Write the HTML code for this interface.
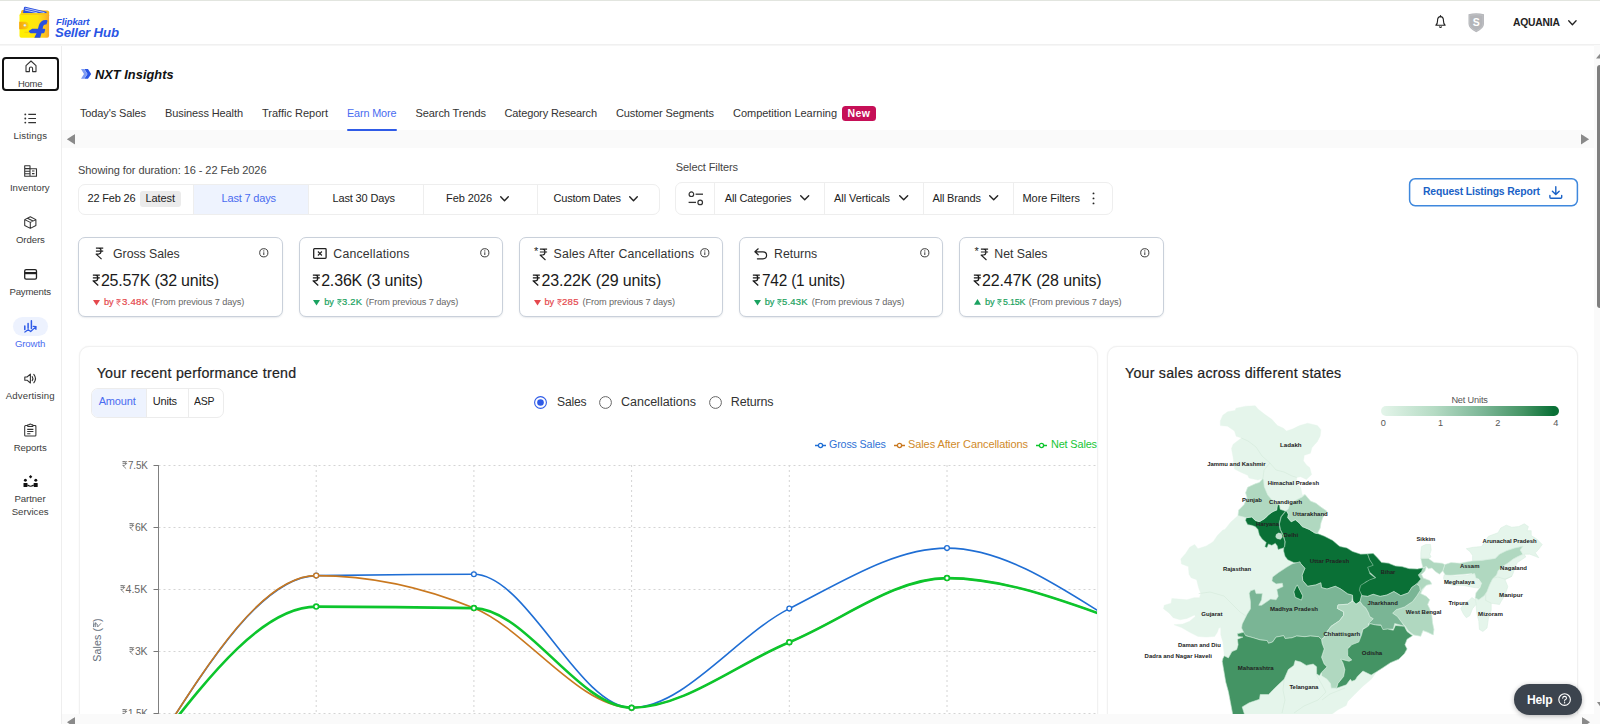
<!DOCTYPE html>
<html><head><meta charset="utf-8"><title>NXT Insights</title><style>
html,body{margin:0;padding:0;}
body{width:1600px;height:724px;overflow:hidden;background:#fff;position:relative;font-family:"Liberation Sans",sans-serif;}
.t{position:absolute;white-space:nowrap;}
.b{position:absolute;box-sizing:border-box;}
svg{overflow:visible;}
</style></head><body>
<div class="b" style="left:0.00px;top:0.00px;width:1600.00px;height:1.00px;background:#e2e5df;"></div>
<div class="b" style="left:0.00px;top:44.00px;width:1600.00px;height:1.00px;background:#f0f0f0;"></div>
<div class="b" style="left:0.00px;top:45.00px;width:1600.00px;height:1.00px;background:#f6f6f6;"></div>
<svg class="b" style="left:18.00px;top:6.00px;" width="33" height="34" viewBox="0 0 33 34">
<defs><linearGradient id="wg" x1="0" y1="0" x2="1" y2="0"><stop offset="0" stop-color="#fff000"/><stop offset="0.62" stop-color="#ffe410"/><stop offset="0.85" stop-color="#fdc41f"/><stop offset="1" stop-color="#f8a626"/></linearGradient>
<linearGradient id="cg" x1="0" y1="0" x2="1" y2="0"><stop offset="0" stop-color="#f6a30c"/><stop offset="1" stop-color="#ffd20a"/></linearGradient></defs>
<path d="M2.6 9 L3.2 5.4 Q3.5 4.1 4.8 4.1 L29.4 4.5 Q31.1 4.6 31.1 6.2 L31.1 10 Z" fill="#f6b416"/>
<path d="M5 7.2 L6 1.6 Q6.3 0.5 7.4 0.8 L28.4 5.7 L28.6 7.3 Z" fill="#2a4fe0"/>
<path d="M7.2 2.2 L26.5 6.6 M6.8 4 L19.5 6.9" stroke="#dfe7ff" stroke-width="0.8" fill="none"/>
<path d="M1.5 9.2 Q1.5 7.3 3.3 7.3 L29.2 7.3 Q31.1 7.3 31.1 9.2 L31.1 29.8 Q31.1 31.7 29.2 31.7 L3.4 31.7 Q1.5 31.7 1.5 29.8 Z" fill="url(#wg)"/>
<path d="M3 8.4 H29.6" stroke="#f6c21a" stroke-width="0.8"/>
<path d="M1.2 15.7 H7 Q10.6 15.7 10.6 19.5 Q10.6 23.3 7 23.3 H1.2 Z" fill="url(#cg)"/>
<circle cx="6.8" cy="19.3" r="1.35" fill="#eef1ff" stroke="#c9b24a" stroke-width="0.4"/>
<path d="M6.4 26.3 H13.5" stroke="#f2c800" stroke-width="0.7"/>
<path d="M16.3 31.7 L18.5 27.3 L12.6 27.3 Q11.2 26.6 10.6 25 L14.2 22.7 L20 22.7 L20.8 19.6 Q22.4 14 27.6 14 L28.6 14 Q29.9 14.2 29.4 15.6 L28.8 17.4 Q28.4 18.6 27.2 18.6 Q25.7 18.6 25.2 20.2 L24.6 22.7 L26.5 22.7 Q27.5 22.9 27.2 23.9 L26.5 26.3 Q26.2 27.3 25.2 27.3 L23.5 27.3 L22.2 31.7 Z" fill="#2a4fe0"/>
</svg>
<div class="t" style="left:56.30px;top:14.80px;font-size:9.8px;line-height:14px;color:#2a55e5;font-weight:bold;font-style:italic;letter-spacing:-0.126px;transform:scaleX(0.9707);transform-origin:0 50%;">Flipkart</div>
<div class="t" style="left:55.00px;top:24.10px;font-size:13.2px;line-height:18px;color:#2a55e5;font-weight:bold;font-style:italic;letter-spacing:-0.143px;">Seller Hub</div>
<svg class="b" style="left:1435.30px;top:15.20px;" width="11" height="13.8" viewBox="0 0 11 13.8"><path d="M5.5 1.7 C3 1.7 2.5 3.9 2.5 5.9 C2.5 8 2 9.3 0.9 10.3 H10.1 C9 9.3 8.5 8 8.5 5.9 C8.5 3.9 8 1.7 5.5 1.7 Z" fill="none" stroke="#222" stroke-width="1.15" stroke-linejoin="round"/><path d="M5.5 0.6 V1.7 M4.5 11.9 Q5.5 13 6.5 11.9" fill="none" stroke="#222" stroke-width="1.15" stroke-linecap="round"/></svg>
<svg class="b" style="left:1467.50px;top:12.70px;" width="16.5" height="19.5" viewBox="0 0 16.5 19.5"><path d="M0.5 1.2 Q8.25 -0.6 16 1.2 V11 Q16 15.5 8.25 19.2 Q0.5 15.5 0.5 11 Z" fill="#b4b5b9"/><path d="M1.6 2.3 Q8.25 0.8 14.9 2.3 V11 Q14.9 14.6 8.25 17.9 Q1.6 14.6 1.6 11 Z" fill="none" stroke="#c6c7ca" stroke-width="0.6"/><text x="8.25" y="13" font-family="Liberation Sans" font-weight="bold" font-size="10.5" fill="#fff" text-anchor="middle">S</text></svg>
<div class="t" style="left:1512.50px;top:14.70px;font-size:10.6px;line-height:15px;color:#222;font-weight:bold;letter-spacing:-0.206px;transform:scaleX(0.9745);transform-origin:0 50%;">AQUANIA</div>
<svg class="b" style="left:1568.30px;top:19.80px;" width="8.8" height="5.4" viewBox="0 0 8.8 5.4"><path d="M0.7 0.7 L4.4 4.7 L8.1 0.7" fill="none" stroke="#222" stroke-width="1.3" stroke-linecap="round" stroke-linejoin="round"/></svg>
<div class="b" style="left:61.00px;top:46.00px;width:1.00px;height:678.00px;background:#eeeeee;"></div>
<div class="b" style="left:2.00px;top:57.00px;width:57.00px;height:34.00px;border:2px solid #111;border-radius:4px;"></div>
<div class="t" style="left:18.00px;top:77.30px;font-size:9.6px;line-height:13px;color:#3c3c3c;font-weight:normal;letter-spacing:-0.213px;transform:scaleX(0.9813);transform-origin:0 50%;">Home</div>
<div class="t" style="left:13.50px;top:129.30px;font-size:9.6px;line-height:13px;color:#3c3c3c;font-weight:normal;letter-spacing:0.136px;">Listings</div>
<div class="t" style="left:9.90px;top:181.40px;font-size:9.6px;line-height:13px;color:#3c3c3c;font-weight:normal;letter-spacing:0.039px;">Inventory</div>
<div class="t" style="left:15.90px;top:233.00px;font-size:9.6px;line-height:13px;color:#3c3c3c;font-weight:normal;letter-spacing:-0.068px;">Orders</div>
<div class="t" style="left:9.40px;top:284.60px;font-size:9.6px;line-height:13px;color:#3c3c3c;font-weight:normal;letter-spacing:-0.155px;">Payments</div>
<div class="b" style="left:12.70px;top:317.00px;width:35.30px;height:18.80px;background:#edf2fe;border-radius:9.4px;"></div>
<div class="t" style="left:14.90px;top:336.90px;font-size:9.6px;line-height:13px;color:#4a6cf0;font-weight:normal;letter-spacing:-0.108px;">Growth</div>
<div class="t" style="left:5.80px;top:388.60px;font-size:9.6px;line-height:13px;color:#3c3c3c;font-weight:normal;letter-spacing:0.131px;">Advertising</div>
<div class="t" style="left:13.80px;top:440.70px;font-size:9.6px;line-height:13px;color:#3c3c3c;font-weight:normal;letter-spacing:-0.119px;">Reports</div>
<div class="t" style="left:14.50px;top:492.40px;font-size:9.6px;line-height:13px;color:#3c3c3c;font-weight:normal;letter-spacing:-0.064px;">Partner</div>
<div class="t" style="left:11.70px;top:505.20px;font-size:9.6px;line-height:13px;color:#3c3c3c;font-weight:normal;letter-spacing:0.013px;">Services</div>
<svg class="b" style="left:24.50px;top:60.30px;" width="12" height="12.5" viewBox="0 0 12 12.5"><path d="M1 5.6 L6 1 L11 5.6 V11.6 H7.6 V8.6 Q7.6 7 6 7 Q4.4 7 4.4 8.6 V11.6 H1 Z" fill="none" stroke="#333" stroke-width="1.1" stroke-linejoin="round"/></svg>
<svg class="b" style="left:24.40px;top:113.20px;" width="12.4" height="11" viewBox="0 0 12.4 11"><g fill="#333"><circle cx="1.3" cy="1.4" r="0.95"/><circle cx="1.3" cy="5.5" r="0.95"/><circle cx="1.3" cy="9.6" r="0.95"/></g><path d="M4.3 1.4 H12 M4.3 5.5 H12 M4.3 9.6 H12" stroke="#333" stroke-width="1.15"/></svg>
<svg class="b" style="left:24.00px;top:164.60px;" width="13.2" height="12" viewBox="0 0 13.2 12"><path d="M0.7 0.7 H6 V11.3 H0.7 Z M6 3.8 H12.5 V11.3 H6 M0.7 3.6 H6 M0.7 6.2 H6 M0.7 8.8 H6 M8 6 H10.5 M8 8.6 H10.5" fill="none" stroke="#333" stroke-width="1.1" stroke-linejoin="round"/></svg>
<svg class="b" style="left:24.30px;top:215.80px;" width="12.6" height="13.2" viewBox="0 0 12.6 13.2"><path d="M6.3 0.8 L11.9 3.6 V9.6 L6.3 12.4 L0.7 9.6 V3.6 Z M0.7 3.6 L6.3 6.4 L11.9 3.6 M6.3 6.4 V12.4 M3.4 2.2 L9.1 5" fill="none" stroke="#333" stroke-width="1.05" stroke-linejoin="round"/></svg>
<svg class="b" style="left:24.00px;top:269.30px;" width="13.2" height="10.8" viewBox="0 0 13.2 10.8"><rect x="0.7" y="0.7" width="11.8" height="9.4" rx="1.4" fill="none" stroke="#222" stroke-width="1.3"/><rect x="0.7" y="3" width="11.8" height="2.2" fill="#222"/></svg>
<svg class="b" style="left:24.40px;top:319.80px;" width="13.2" height="12.8" viewBox="0 0 13.2 12.8"><path d="M0.8 6 V9.4 M4.1 3.4 V8.2 M7.4 0.7 V8.6" stroke="#2f5be7" stroke-width="1.5" stroke-linecap="round"/><path d="M0.9 12.1 L4.2 9.7 L6.7 11.5 L11.8 6.9 M9.2 6.3 L12.1 6.5 L11.9 9.4" fill="none" stroke="#2f5be7" stroke-width="1.25" stroke-linecap="round" stroke-linejoin="round"/></svg>
<svg class="b" style="left:24.40px;top:372.80px;" width="12.6" height="11.2" viewBox="0 0 12.6 11.2"><path d="M0.8 4 H3 L6.4 1.2 V10 L3 7.2 H0.8 Z" fill="none" stroke="#333" stroke-width="1.1" stroke-linejoin="round"/><path d="M8.2 3.6 Q9.6 5.6 8.2 7.6 M9.8 1.4 Q13.2 5.6 9.8 9.8" fill="none" stroke="#333" stroke-width="1.1" stroke-linecap="round"/></svg>
<svg class="b" style="left:24.40px;top:423.20px;" width="12.6" height="13.8" viewBox="0 0 12.6 13.8"><path d="M3.8 2.4 H1.6 Q0.7 2.4 0.7 3.4 V12.2 Q0.7 13.1 1.6 13.1 H11 Q11.9 13.1 11.9 12.2 V3.4 Q11.9 2.4 11 2.4 H8.8 M3.8 3.4 V1.8 H5.2 Q6.3 0 7.4 1.8 H8.8 V3.4 Z M3.2 6.4 H9.4 M3.2 8.6 H9.4 M3.2 10.8 H6.4" fill="none" stroke="#333" stroke-width="1.05" stroke-linejoin="round"/></svg>
<svg class="b" style="left:23.00px;top:475.20px;" width="15.2" height="12.4" viewBox="0 0 15.2 12.4"><g fill="#111"><path d="M7.6 0 L9.3 1.7 L7.6 3.4 L5.9 1.7 Z"/><circle cx="2.4" cy="5.2" r="1.5"/><circle cx="12.8" cy="5.2" r="1.5"/><rect x="0.5" y="8" width="4" height="4" rx="0.6"/><rect x="10.7" y="8" width="4" height="4" rx="0.6"/></g><path d="M4.5 10 Q7.6 12.4 10.7 10" fill="none" stroke="#111" stroke-width="1.1"/></svg>
<svg class="b" style="left:81.00px;top:69.20px;" width="10.4" height="9.8" viewBox="0 0 10.4 9.8"><path d="M0 0 H3.2 L6.2 4.9 L3.2 9.8 H0 L3 4.9 Z" fill="#7f9cf3"/><path d="M3.4 0 H7 L10.2 4.9 L7 9.8 H3.4 L6.5 4.9 Z" fill="#2a55e5"/></svg>
<div class="t" style="left:95.00px;top:65.50px;font-size:12.8px;line-height:18px;color:#111;font-weight:bold;font-style:italic;letter-spacing:0.034px;">NXT Insights</div>
<div class="t" style="left:80.00px;top:105.50px;font-size:11px;line-height:15px;color:#333;font-weight:normal;letter-spacing:-0.127px;">Today&#x27;s Sales</div>
<div class="t" style="left:165.00px;top:105.50px;font-size:11px;line-height:15px;color:#333;font-weight:normal;letter-spacing:-0.106px;">Business Health</div>
<div class="t" style="left:262.00px;top:105.50px;font-size:11px;line-height:15px;color:#333;font-weight:normal;letter-spacing:-0.002px;">Traffic Report</div>
<div class="t" style="left:347.00px;top:105.50px;font-size:11px;line-height:15px;color:#4a6cf0;font-weight:normal;letter-spacing:-0.160px;transform:scaleX(0.9886);transform-origin:0 50%;">Earn More</div>
<div class="t" style="left:415.50px;top:105.50px;font-size:11px;line-height:15px;color:#333;font-weight:normal;letter-spacing:-0.087px;">Search Trends</div>
<div class="t" style="left:504.50px;top:105.50px;font-size:11px;line-height:15px;color:#333;font-weight:normal;letter-spacing:-0.142px;">Category Research</div>
<div class="t" style="left:616.00px;top:105.50px;font-size:11px;line-height:15px;color:#333;font-weight:normal;letter-spacing:-0.141px;">Customer Segments</div>
<div class="t" style="left:733.00px;top:105.50px;font-size:11px;line-height:15px;color:#333;font-weight:normal;letter-spacing:-0.030px;">Competition Learning</div>
<div class="b" style="left:841.50px;top:105.50px;width:34.50px;height:15.00px;background:#c60f57;border-radius:3.5px;"></div>
<div class="t" style="left:847.50px;top:105.50px;font-size:10.5px;line-height:15px;color:#fff;font-weight:bold;letter-spacing:0.455px;">New</div>
<div class="b" style="left:62.00px;top:130.00px;width:1532.00px;height:17.50px;background:#fafafa;"></div>
<svg class="b" style="left:67.00px;top:134.20px;" width="8" height="10.4" viewBox="0 0 8 10.4"><path d="M8 0.3 Q8 0 7.6 0.2 L0.3 4.9 Q0 5.2 0.3 5.5 L7.6 10.2 Q8 10.4 8 10.1 Z" fill="#8a8a8a"/></svg>
<svg class="b" style="left:1581.00px;top:134.20px;" width="8" height="10.4" viewBox="0 0 8 10.4"><path d="M0 0.3 Q0 0 0.4 0.2 L7.7 4.9 Q8 5.2 7.7 5.5 L0.4 10.2 Q0 10.4 0 10.1 Z" fill="#8a8a8a"/></svg>
<div class="b" style="left:347.00px;top:128.70px;width:50.00px;height:2.30px;background:#2f5be7;border-radius:1px;"></div>
<div class="t" style="left:78.00px;top:162.50px;font-size:11px;line-height:15px;color:#444;font-weight:normal;letter-spacing:-0.062px;">Showing for duration: 16 - 22 Feb 2026</div>
<div class="b" style="left:78.00px;top:184.00px;width:582.00px;height:31.00px;border:1px solid #eeeeee;border-radius:7px;"></div>
<div class="b" style="left:193.00px;top:185.00px;width:114.50px;height:29.00px;background:#eef3fe;"></div>
<div class="b" style="left:193.00px;top:185.00px;width:1.00px;height:29.00px;background:#eeeeee;"></div>
<div class="b" style="left:307.50px;top:185.00px;width:1.00px;height:29.00px;background:#eeeeee;"></div>
<div class="b" style="left:422.50px;top:185.00px;width:1.00px;height:29.00px;background:#eeeeee;"></div>
<div class="b" style="left:537.00px;top:185.00px;width:1.00px;height:29.00px;background:#eeeeee;"></div>
<div class="t" style="left:87.50px;top:191.30px;font-size:11px;line-height:15px;color:#222;font-weight:normal;letter-spacing:-0.192px;">22 Feb 26</div>
<div class="b" style="left:139.50px;top:191.00px;width:41.50px;height:16.00px;background:#ebebeb;border-radius:3px;"></div>
<div class="t" style="left:145.50px;top:191.30px;font-size:11px;line-height:15px;color:#222;font-weight:normal;letter-spacing:-0.093px;">Latest</div>
<div class="t" style="left:221.50px;top:191.30px;font-size:11px;line-height:15px;color:#4a6cf0;font-weight:normal;letter-spacing:-0.176px;">Last 7 days</div>
<div class="t" style="left:332.50px;top:191.30px;font-size:11px;line-height:15px;color:#222;font-weight:normal;letter-spacing:-0.155px;">Last 30 Days</div>
<div class="t" style="left:446.00px;top:191.30px;font-size:11px;line-height:15px;color:#222;font-weight:normal;letter-spacing:-0.069px;">Feb 2026</div>
<svg class="b" style="left:500.00px;top:196.20px;" width="9" height="5.4" viewBox="0 0 9 5.4"><path d="M0.7 0.7 L4.5 4.7 L8.3 0.7" fill="none" stroke="#222" stroke-width="1.4" stroke-linecap="round" stroke-linejoin="round"/></svg>
<div class="t" style="left:553.50px;top:191.30px;font-size:11px;line-height:15px;color:#222;font-weight:normal;letter-spacing:-0.199px;">Custom Dates</div>
<svg class="b" style="left:629.00px;top:196.20px;" width="9" height="5.4" viewBox="0 0 9 5.4"><path d="M0.7 0.7 L4.5 4.7 L8.3 0.7" fill="none" stroke="#222" stroke-width="1.4" stroke-linecap="round" stroke-linejoin="round"/></svg>
<div class="t" style="left:675.80px;top:160.00px;font-size:11px;line-height:15px;color:#444;font-weight:normal;letter-spacing:-0.106px;">Select Filters</div>
<div class="b" style="left:675.40px;top:182.00px;width:437.40px;height:33.00px;border:1px solid #eeeeee;border-radius:7px;"></div>
<div class="b" style="left:714.00px;top:183.00px;width:1.00px;height:31.00px;background:#eeeeee;"></div>
<div class="b" style="left:823.50px;top:183.00px;width:1.00px;height:31.00px;background:#eeeeee;"></div>
<div class="b" style="left:922.50px;top:183.00px;width:1.00px;height:31.00px;background:#eeeeee;"></div>
<div class="b" style="left:1013.00px;top:183.00px;width:1.00px;height:31.00px;background:#eeeeee;"></div>
<svg class="b" style="left:688.00px;top:190.60px;" width="15.6" height="14.8" viewBox="0 0 15.6 14.8"><circle cx="3.4" cy="3.2" r="2.3" fill="none" stroke="#333" stroke-width="1.2"/><path d="M7.6 3.2 H15" stroke="#333" stroke-width="1.3"/><circle cx="12.2" cy="11.4" r="2.3" fill="none" stroke="#333" stroke-width="1.2"/><path d="M0.6 11.4 H8" stroke="#333" stroke-width="1.3"/></svg>
<div class="t" style="left:724.80px;top:190.50px;font-size:11px;line-height:15px;color:#222;font-weight:normal;letter-spacing:-0.137px;">All Categories</div>
<svg class="b" style="left:800.00px;top:195.40px;" width="9.4" height="5.4" viewBox="0 0 9.4 5.4"><path d="M0.7 0.7 L4.7 4.7 L8.7 0.7" fill="none" stroke="#222" stroke-width="1.4" stroke-linecap="round" stroke-linejoin="round"/></svg>
<div class="t" style="left:834.00px;top:190.50px;font-size:11px;line-height:15px;color:#222;font-weight:normal;letter-spacing:-0.071px;">All Verticals</div>
<svg class="b" style="left:898.50px;top:195.40px;" width="9.4" height="5.4" viewBox="0 0 9.4 5.4"><path d="M0.7 0.7 L4.7 4.7 L8.7 0.7" fill="none" stroke="#222" stroke-width="1.4" stroke-linecap="round" stroke-linejoin="round"/></svg>
<div class="t" style="left:932.50px;top:190.50px;font-size:11px;line-height:15px;color:#222;font-weight:normal;letter-spacing:-0.182px;">All Brands</div>
<svg class="b" style="left:989.00px;top:195.40px;" width="9.4" height="5.4" viewBox="0 0 9.4 5.4"><path d="M0.7 0.7 L4.7 4.7 L8.7 0.7" fill="none" stroke="#222" stroke-width="1.4" stroke-linecap="round" stroke-linejoin="round"/></svg>
<div class="t" style="left:1022.50px;top:190.50px;font-size:11px;line-height:15px;color:#222;font-weight:normal;letter-spacing:-0.051px;">More Filters</div>
<svg class="b" style="left:1091.50px;top:192.00px;" width="3" height="13" viewBox="0 0 3 13"><circle cx="1.5" cy="1.4" r="0.95" fill="#222"/><circle cx="1.5" cy="6.4" r="0.95" fill="#222"/><circle cx="1.5" cy="11.4" r="0.95" fill="#222"/></svg>
<svg class="b" style="left:1408.00px;top:177.00px;" width="172" height="31" viewBox="0 0 172 31"><rect x="1.6" y="1.75" width="167.8" height="26.9" rx="5.6" fill="#fff" stroke="#3f88dd" stroke-width="1.5"/></svg>
<div class="t" style="left:1423.00px;top:184.30px;font-size:11px;line-height:15px;color:#1a62c6;font-weight:bold;letter-spacing:-0.144px;transform:scaleX(0.9440);transform-origin:0 50%;">Request Listings Report</div>
<svg class="b" style="left:1548.60px;top:186.00px;" width="13.6" height="13" viewBox="0 0 13.6 13"><path d="M6.8 0.8 V8.4 M3.4 5.2 L6.8 8.6 L10.2 5.2 M0.9 9.4 V11.2 Q0.9 12.2 1.9 12.2 H11.7 Q12.7 12.2 12.7 11.2 V9.4" fill="none" stroke="#1a62c6" stroke-width="1.4" stroke-linecap="round" stroke-linejoin="round"/></svg>
<div class="b" style="left:78.30px;top:237.20px;width:204.40px;height:79.50px;border:1px solid #c9d0da;border-radius:7px;box-shadow:0 1px 1.5px rgba(120,130,150,0.16);background:#fff;"></div>
<svg class="b" style="left:94.90px;top:247.30px;" width="9.14286" height="12.8" viewBox="0 0 10 14"><path d="M1 1.2H9M1 4.5H9M1 1.2H3.8C7.6 1.2 7.6 7.8 3.8 7.8H1.2L7.2 13.3" fill="none" stroke="#222" stroke-width="1.25" stroke-linejoin="round"/></svg>
<div class="t" style="left:113.10px;top:246.00px;font-size:12.3px;line-height:17px;color:#333;font-weight:normal;letter-spacing:-0.049px;">Gross Sales</div>
<svg class="b" style="left:259.30px;top:247.60px;" width="9.6" height="9.6" viewBox="0 0 9.6 9.6"><circle cx="4.8" cy="4.8" r="4.1" fill="none" stroke="#333" stroke-width="0.95"/><path d="M4.8 4.3 V7" stroke="#333" stroke-width="1"/><circle cx="4.8" cy="2.9" r="0.6" fill="#333"/></svg>
<svg class="b" style="left:91.60px;top:274.40px;" width="8.71429" height="12.2" viewBox="0 0 10 14"><path d="M1 1.2H9M1 4.5H9M1 1.2H3.8C7.6 1.2 7.6 7.8 3.8 7.8H1.2L7.2 13.3" fill="none" stroke="#1a1a1a" stroke-width="1.45" stroke-linejoin="round"/></svg>
<div class="t" style="left:100.90px;top:269.50px;font-size:16px;line-height:22px;color:#1a1a1a;font-weight:normal;letter-spacing:-0.228px;">25.57K (32 units)</div>
<svg class="b" style="left:93.10px;top:299.90px;" width="7" height="5.6" viewBox="0 0 7 5.6"><path d="M0 0 H7 L3.5 5.6 Z" fill="#e5484d"/></svg>
<div class="t" style="left:104.00px;top:296.20px;font-size:9.2px;line-height:13px;color:#e5484d;font-weight:normal;letter-spacing:-0.117px;-webkit-text-stroke:0.2px #e5484d;">by</div>
<svg class="b" style="left:116.40px;top:299.00px;" width="5.14286" height="7.2" viewBox="0 0 10 14"><path d="M1 1.2H9M1 4.5H9M1 1.2H3.8C7.6 1.2 7.6 7.8 3.8 7.8H1.2L7.2 13.3" fill="none" stroke="#e5484d" stroke-width="1.5" stroke-linejoin="round"/></svg>
<div class="t" style="left:121.60px;top:296.20px;font-size:9.2px;line-height:13px;color:#e5484d;font-weight:normal;letter-spacing:0.210px;transform:scaleX(1.0529);transform-origin:0 50%;-webkit-text-stroke:0.2px #e5484d;">3.48K</div>
<div class="t" style="left:151.60px;top:296.20px;font-size:9.2px;line-height:13px;color:#666;font-weight:normal;letter-spacing:-0.085px;">(From previous 7 days)</div>
<div class="b" style="left:298.55px;top:237.20px;width:204.40px;height:79.50px;border:1px solid #c9d0da;border-radius:7px;box-shadow:0 1px 1.5px rgba(120,130,150,0.16);background:#fff;"></div>
<svg class="b" style="left:312.55px;top:248.00px;" width="13.8" height="11" viewBox="0 0 13.8 11"><rect x="0.7" y="0.7" width="12.4" height="9.6" rx="0.8" fill="none" stroke="#222" stroke-width="1.3"/><path d="M4.9 3.5 L8.9 7.5 M8.9 3.5 L4.9 7.5" stroke="#222" stroke-width="1.1"/></svg>
<div class="t" style="left:333.35px;top:246.00px;font-size:12.3px;line-height:17px;color:#333;font-weight:normal;letter-spacing:0.188px;">Cancellations</div>
<svg class="b" style="left:479.55px;top:247.60px;" width="9.6" height="9.6" viewBox="0 0 9.6 9.6"><circle cx="4.8" cy="4.8" r="4.1" fill="none" stroke="#333" stroke-width="0.95"/><path d="M4.8 4.3 V7" stroke="#333" stroke-width="1"/><circle cx="4.8" cy="2.9" r="0.6" fill="#333"/></svg>
<svg class="b" style="left:311.85px;top:274.40px;" width="8.71429" height="12.2" viewBox="0 0 10 14"><path d="M1 1.2H9M1 4.5H9M1 1.2H3.8C7.6 1.2 7.6 7.8 3.8 7.8H1.2L7.2 13.3" fill="none" stroke="#1a1a1a" stroke-width="1.45" stroke-linejoin="round"/></svg>
<div class="t" style="left:321.15px;top:269.50px;font-size:16px;line-height:22px;color:#1a1a1a;font-weight:normal;letter-spacing:-0.168px;">2.36K (3 units)</div>
<svg class="b" style="left:313.35px;top:299.90px;" width="7" height="5.6" viewBox="0 0 7 5.6"><path d="M0 0 H7 L3.5 5.6 Z" fill="#1aa260"/></svg>
<div class="t" style="left:324.25px;top:296.20px;font-size:9.2px;line-height:13px;color:#1aa260;font-weight:normal;letter-spacing:-0.117px;-webkit-text-stroke:0.2px #1aa260;">by</div>
<svg class="b" style="left:336.65px;top:299.00px;" width="5.14286" height="7.2" viewBox="0 0 10 14"><path d="M1 1.2H9M1 4.5H9M1 1.2H3.8C7.6 1.2 7.6 7.8 3.8 7.8H1.2L7.2 13.3" fill="none" stroke="#1aa260" stroke-width="1.5" stroke-linejoin="round"/></svg>
<div class="t" style="left:341.85px;top:296.20px;font-size:9.2px;line-height:13px;color:#1aa260;font-weight:normal;letter-spacing:0.221px;transform:scaleX(1.0261);transform-origin:0 50%;-webkit-text-stroke:0.2px #1aa260;">3.2K</div>
<div class="t" style="left:365.75px;top:296.20px;font-size:9.2px;line-height:13px;color:#666;font-weight:normal;letter-spacing:-0.085px;">(From previous 7 days)</div>
<div class="b" style="left:518.80px;top:237.20px;width:204.40px;height:79.50px;border:1px solid #c9d0da;border-radius:7px;box-shadow:0 1px 1.5px rgba(120,130,150,0.16);background:#fff;"></div>
<div class="t" style="left:534.00px;top:244.00px;font-size:11px;line-height:15px;color:#222;font-weight:normal;">*</div>
<svg class="b" style="left:539.40px;top:247.80px;" width="9" height="12.6" viewBox="0 0 10 14"><path d="M1 1.2H9M1 4.5H9M1 1.2H3.8C7.6 1.2 7.6 7.8 3.8 7.8H1.2L7.2 13.3" fill="none" stroke="#222" stroke-width="1.25" stroke-linejoin="round"/></svg>
<div class="t" style="left:553.60px;top:246.00px;font-size:12.3px;line-height:17px;color:#333;font-weight:normal;letter-spacing:0.161px;">Sales After Cancellations</div>
<svg class="b" style="left:700.20px;top:247.60px;" width="9.6" height="9.6" viewBox="0 0 9.6 9.6"><circle cx="4.8" cy="4.8" r="4.1" fill="none" stroke="#333" stroke-width="0.95"/><path d="M4.8 4.3 V7" stroke="#333" stroke-width="1"/><circle cx="4.8" cy="2.9" r="0.6" fill="#333"/></svg>
<svg class="b" style="left:532.10px;top:274.40px;" width="8.71429" height="12.2" viewBox="0 0 10 14"><path d="M1 1.2H9M1 4.5H9M1 1.2H3.8C7.6 1.2 7.6 7.8 3.8 7.8H1.2L7.2 13.3" fill="none" stroke="#1a1a1a" stroke-width="1.45" stroke-linejoin="round"/></svg>
<div class="t" style="left:541.40px;top:269.50px;font-size:16px;line-height:22px;color:#1a1a1a;font-weight:normal;letter-spacing:-0.122px;">23.22K (29 units)</div>
<svg class="b" style="left:533.60px;top:299.90px;" width="7" height="5.6" viewBox="0 0 7 5.6"><path d="M0 0 H7 L3.5 5.6 Z" fill="#e5484d"/></svg>
<div class="t" style="left:544.50px;top:296.20px;font-size:9.2px;line-height:13px;color:#e5484d;font-weight:normal;letter-spacing:-0.117px;-webkit-text-stroke:0.2px #e5484d;">by</div>
<svg class="b" style="left:556.90px;top:299.00px;" width="5.14286" height="7.2" viewBox="0 0 10 14"><path d="M1 1.2H9M1 4.5H9M1 1.2H3.8C7.6 1.2 7.6 7.8 3.8 7.8H1.2L7.2 13.3" fill="none" stroke="#e5484d" stroke-width="1.5" stroke-linejoin="round"/></svg>
<div class="t" style="left:562.10px;top:296.20px;font-size:9.2px;line-height:13px;color:#e5484d;font-weight:normal;letter-spacing:0.269px;transform:scaleX(1.0449);transform-origin:0 50%;-webkit-text-stroke:0.2px #e5484d;">285</div>
<div class="t" style="left:582.50px;top:296.20px;font-size:9.2px;line-height:13px;color:#666;font-weight:normal;letter-spacing:-0.085px;">(From previous 7 days)</div>
<div class="b" style="left:739.05px;top:237.20px;width:204.40px;height:79.50px;border:1px solid #c9d0da;border-radius:7px;box-shadow:0 1px 1.5px rgba(120,130,150,0.16);background:#fff;"></div>
<svg class="b" style="left:753.85px;top:247.60px;" width="13.4" height="11.6" viewBox="0 0 13.4 11.6"><path d="M4.2 0.8 L0.9 3.8 L4.2 6.8 M0.9 3.8 H9 Q12.6 3.8 12.6 7.3 Q12.6 10.8 9 10.8 H3.4" fill="none" stroke="#222" stroke-width="1.2" stroke-linecap="round" stroke-linejoin="round"/></svg>
<div class="t" style="left:774.05px;top:246.00px;font-size:12.3px;line-height:17px;color:#333;font-weight:normal;letter-spacing:0.005px;">Returns</div>
<svg class="b" style="left:920.05px;top:247.60px;" width="9.6" height="9.6" viewBox="0 0 9.6 9.6"><circle cx="4.8" cy="4.8" r="4.1" fill="none" stroke="#333" stroke-width="0.95"/><path d="M4.8 4.3 V7" stroke="#333" stroke-width="1"/><circle cx="4.8" cy="2.9" r="0.6" fill="#333"/></svg>
<svg class="b" style="left:752.35px;top:274.40px;" width="8.71429" height="12.2" viewBox="0 0 10 14"><path d="M1 1.2H9M1 4.5H9M1 1.2H3.8C7.6 1.2 7.6 7.8 3.8 7.8H1.2L7.2 13.3" fill="none" stroke="#1a1a1a" stroke-width="1.45" stroke-linejoin="round"/></svg>
<div class="t" style="left:761.65px;top:269.50px;font-size:16px;line-height:22px;color:#1a1a1a;font-weight:normal;letter-spacing:-0.185px;transform:scaleX(0.9595);transform-origin:0 50%;">742 (1 units)</div>
<svg class="b" style="left:753.85px;top:299.90px;" width="7" height="5.6" viewBox="0 0 7 5.6"><path d="M0 0 H7 L3.5 5.6 Z" fill="#1aa260"/></svg>
<div class="t" style="left:764.75px;top:296.20px;font-size:9.2px;line-height:13px;color:#1aa260;font-weight:normal;letter-spacing:-0.117px;-webkit-text-stroke:0.2px #1aa260;">by</div>
<svg class="b" style="left:777.15px;top:299.00px;" width="5.14286" height="7.2" viewBox="0 0 10 14"><path d="M1 1.2H9M1 4.5H9M1 1.2H3.8C7.6 1.2 7.6 7.8 3.8 7.8H1.2L7.2 13.3" fill="none" stroke="#1aa260" stroke-width="1.5" stroke-linejoin="round"/></svg>
<div class="t" style="left:782.35px;top:296.20px;font-size:9.2px;line-height:13px;color:#1aa260;font-weight:normal;letter-spacing:0.210px;transform:scaleX(1.0288);transform-origin:0 50%;-webkit-text-stroke:0.2px #1aa260;">5.43K</div>
<div class="t" style="left:811.75px;top:296.20px;font-size:9.2px;line-height:13px;color:#666;font-weight:normal;letter-spacing:-0.085px;">(From previous 7 days)</div>
<div class="b" style="left:959.30px;top:237.20px;width:204.40px;height:79.50px;border:1px solid #c9d0da;border-radius:7px;box-shadow:0 1px 1.5px rgba(120,130,150,0.16);background:#fff;"></div>
<div class="t" style="left:974.50px;top:244.00px;font-size:11px;line-height:15px;color:#222;font-weight:normal;">*</div>
<svg class="b" style="left:979.90px;top:247.80px;" width="9" height="12.6" viewBox="0 0 10 14"><path d="M1 1.2H9M1 4.5H9M1 1.2H3.8C7.6 1.2 7.6 7.8 3.8 7.8H1.2L7.2 13.3" fill="none" stroke="#222" stroke-width="1.25" stroke-linejoin="round"/></svg>
<div class="t" style="left:994.30px;top:246.00px;font-size:12.3px;line-height:17px;color:#333;font-weight:normal;letter-spacing:-0.028px;">Net Sales</div>
<svg class="b" style="left:1140.30px;top:247.60px;" width="9.6" height="9.6" viewBox="0 0 9.6 9.6"><circle cx="4.8" cy="4.8" r="4.1" fill="none" stroke="#333" stroke-width="0.95"/><path d="M4.8 4.3 V7" stroke="#333" stroke-width="1"/><circle cx="4.8" cy="2.9" r="0.6" fill="#333"/></svg>
<svg class="b" style="left:972.60px;top:274.40px;" width="8.71429" height="12.2" viewBox="0 0 10 14"><path d="M1 1.2H9M1 4.5H9M1 1.2H3.8C7.6 1.2 7.6 7.8 3.8 7.8H1.2L7.2 13.3" fill="none" stroke="#1a1a1a" stroke-width="1.45" stroke-linejoin="round"/></svg>
<div class="t" style="left:981.90px;top:269.50px;font-size:16px;line-height:22px;color:#1a1a1a;font-weight:normal;letter-spacing:-0.128px;">22.47K (28 units)</div>
<svg class="b" style="left:974.10px;top:299.30px;" width="7" height="5.8" viewBox="0 0 7 5.8"><path d="M0 5.8 H7 L3.5 0 Z" fill="#1aa260"/></svg>
<div class="t" style="left:985.00px;top:296.20px;font-size:9.2px;line-height:13px;color:#1aa260;font-weight:normal;letter-spacing:-0.117px;-webkit-text-stroke:0.2px #1aa260;">by</div>
<svg class="b" style="left:997.40px;top:299.00px;" width="5.14286" height="7.2" viewBox="0 0 10 14"><path d="M1 1.2H9M1 4.5H9M1 1.2H3.8C7.6 1.2 7.6 7.8 3.8 7.8H1.2L7.2 13.3" fill="none" stroke="#1aa260" stroke-width="1.5" stroke-linejoin="round"/></svg>
<div class="t" style="left:1002.60px;top:296.20px;font-size:9.2px;line-height:13px;color:#1aa260;font-weight:normal;letter-spacing:-0.150px;transform:scaleX(0.9556);transform-origin:0 50%;-webkit-text-stroke:0.2px #1aa260;">5.15K</div>
<div class="t" style="left:1028.80px;top:296.20px;font-size:9.2px;line-height:13px;color:#666;font-weight:normal;letter-spacing:-0.085px;">(From previous 7 days)</div>
<div class="b" style="left:78.50px;top:345.80px;width:1019.00px;height:400.00px;border:1px solid #f1f1f1;border-radius:10px;background:#fff;box-shadow:0 0 1.5px rgba(0,0,0,0.07);"></div>
<div class="t" style="left:96.70px;top:362.70px;font-size:14.2px;line-height:20px;color:#222;font-weight:normal;letter-spacing:0.269px;-webkit-text-stroke:0.2px #222;">Your recent performance trend</div>
<div class="b" style="left:91.30px;top:387.60px;width:132.50px;height:30.20px;border:1px solid #ececec;border-radius:7px;overflow:hidden;"></div>
<div class="b" style="left:92.30px;top:388.60px;width:53.60px;height:28.20px;background:#eef3fe;border-radius:6px 0 0 6px;"></div>
<div class="b" style="left:145.90px;top:388.60px;width:1.00px;height:28.20px;background:#ececec;"></div>
<div class="b" style="left:187.50px;top:388.60px;width:1.00px;height:28.20px;background:#ececec;"></div>
<div class="t" style="left:98.70px;top:394.20px;font-size:11px;line-height:15px;color:#4a6cf0;font-weight:normal;letter-spacing:-0.162px;">Amount</div>
<div class="t" style="left:152.80px;top:394.20px;font-size:11px;line-height:15px;color:#222;font-weight:normal;letter-spacing:-0.215px;">Units</div>
<div class="t" style="left:193.80px;top:394.20px;font-size:11px;line-height:15px;color:#222;font-weight:normal;letter-spacing:-0.275px;transform:scaleX(0.9506);transform-origin:0 50%;">ASP</div>
<svg class="b" style="left:534.00px;top:395.50px;" width="13" height="13" viewBox="0 0 13 13"><circle cx="6.5" cy="6.5" r="5.9" fill="#fff" stroke="#2f5be7" stroke-width="1.1"/><circle cx="6.5" cy="6.5" r="3.3" fill="#2f5be7"/></svg>
<div class="t" style="left:556.50px;top:393.00px;font-size:12.5px;line-height:18px;color:#333;font-weight:normal;letter-spacing:-0.195px;transform:scaleX(0.9676);transform-origin:0 50%;">Sales</div>
<svg class="b" style="left:598.75px;top:395.50px;" width="13" height="13" viewBox="0 0 13 13"><circle cx="6.5" cy="6.5" r="5.9" fill="#fff" stroke="#666" stroke-width="1"/></svg>
<div class="t" style="left:621.00px;top:393.00px;font-size:12.5px;line-height:18px;color:#333;font-weight:normal;letter-spacing:-0.004px;">Cancellations</div>
<svg class="b" style="left:708.75px;top:395.50px;" width="13" height="13" viewBox="0 0 13 13"><circle cx="6.5" cy="6.5" r="5.9" fill="#fff" stroke="#666" stroke-width="1"/></svg>
<div class="t" style="left:730.80px;top:393.00px;font-size:12.5px;line-height:18px;color:#333;font-weight:normal;letter-spacing:-0.178px;">Returns</div>
<div class="b" style="left:79.5px;top:430px;width:1017px;height:294px;overflow:hidden;"><svg style="position:absolute;left:-79.5px;top:-430px;" width="1600" height="724" viewBox="0 0 1600 724"><path d="M158.5 465.5 H1097" stroke="#d4d4d4" stroke-width="1" stroke-dasharray="2 3" fill="none"/><path d="M153.5 465.5 H158.5" stroke="#777" stroke-width="1"/><path d="M158.5 527.5 H1097" stroke="#d4d4d4" stroke-width="1" stroke-dasharray="2 3" fill="none"/><path d="M153.5 527.5 H158.5" stroke="#777" stroke-width="1"/><path d="M158.5 589.5 H1097" stroke="#d4d4d4" stroke-width="1" stroke-dasharray="2 3" fill="none"/><path d="M153.5 589.5 H158.5" stroke="#777" stroke-width="1"/><path d="M158.5 651.5 H1097" stroke="#d4d4d4" stroke-width="1" stroke-dasharray="2 3" fill="none"/><path d="M153.5 651.5 H158.5" stroke="#777" stroke-width="1"/><path d="M158.5 713.5 H1097" stroke="#d4d4d4" stroke-width="1" stroke-dasharray="2 3" fill="none"/><path d="M153.5 713.5 H158.5" stroke="#777" stroke-width="1"/><path d="M316.2 465 V724" stroke="#d4d4d4" stroke-width="1" stroke-dasharray="2 3" fill="none"/><path d="M473.9 465 V724" stroke="#d4d4d4" stroke-width="1" stroke-dasharray="2 3" fill="none"/><path d="M631.6 465 V724" stroke="#d4d4d4" stroke-width="1" stroke-dasharray="2 3" fill="none"/><path d="M789.3 465 V724" stroke="#d4d4d4" stroke-width="1" stroke-dasharray="2 3" fill="none"/><path d="M947 465 V724" stroke="#d4d4d4" stroke-width="1" stroke-dasharray="2 3" fill="none"/><path d="M158.5 465 V724" stroke="#808080" stroke-width="1"/><path d="M158.50 741.00 C211.07 658.73 263.63 576.47 316.20 575.60 C368.77 574.73 421.33 574.30 473.90 574.30 C526.47 574.30 579.03 707.70 631.60 707.70 C684.17 707.70 736.73 635.20 789.30 608.60 C841.87 582.00 894.43 548.10 947.00 548.10 C999.57 548.10 1052.13 581.55 1104.70 615.00" fill="none" stroke="#1f6ed4" stroke-width="1.6" stroke-linejoin="round"/><circle cx="158.5" cy="741.0" r="2.4" fill="#fff" stroke="#1f6ed4" stroke-width="1.3"/><circle cx="316.2" cy="575.6" r="2.4" fill="#fff" stroke="#1f6ed4" stroke-width="1.3"/><circle cx="473.9" cy="574.3" r="2.4" fill="#fff" stroke="#1f6ed4" stroke-width="1.3"/><circle cx="631.6" cy="707.7" r="2.4" fill="#fff" stroke="#1f6ed4" stroke-width="1.3"/><circle cx="789.3" cy="608.6" r="2.4" fill="#fff" stroke="#1f6ed4" stroke-width="1.3"/><circle cx="947.0" cy="548.1" r="2.4" fill="#fff" stroke="#1f6ed4" stroke-width="1.3"/><circle cx="1104.7" cy="615.0" r="2.4" fill="#fff" stroke="#1f6ed4" stroke-width="1.3"/><path d="M158.50 741.00 C211.07 658.30 263.63 575.60 316.20 575.60 C368.77 575.60 421.33 586.43 473.90 608.10 C526.47 629.77 579.03 707.70 631.60 707.70 C684.17 707.70 736.73 663.80 789.30 642.20 C841.87 620.60 894.43 578.10 947.00 578.10 C999.57 578.10 1052.13 596.80 1104.70 615.50" fill="none" stroke="#c9781f" stroke-width="1.6" stroke-linejoin="round"/><circle cx="158.5" cy="741.0" r="2.4" fill="#fff" stroke="#c9781f" stroke-width="1.3"/><circle cx="316.2" cy="575.6" r="2.4" fill="#fff" stroke="#c9781f" stroke-width="1.3"/><circle cx="473.9" cy="608.1" r="2.4" fill="#fff" stroke="#c9781f" stroke-width="1.3"/><circle cx="631.6" cy="707.7" r="2.4" fill="#fff" stroke="#c9781f" stroke-width="1.3"/><circle cx="789.3" cy="642.2" r="2.4" fill="#fff" stroke="#c9781f" stroke-width="1.3"/><circle cx="947.0" cy="578.1" r="2.4" fill="#fff" stroke="#c9781f" stroke-width="1.3"/><circle cx="1104.7" cy="615.5" r="2.4" fill="#fff" stroke="#c9781f" stroke-width="1.3"/><path d="M158.50 741.00 C211.07 673.80 263.63 606.60 316.20 606.60 C368.77 606.60 421.33 607.10 473.90 608.10 C526.47 609.10 579.03 707.70 631.60 707.70 C684.17 707.70 736.73 663.80 789.30 642.20 C841.87 620.60 894.43 578.10 947.00 578.10 C999.57 578.10 1052.13 596.80 1104.70 615.50" fill="none" stroke="#0cc52c" stroke-width="2.6" stroke-linejoin="round"/><circle cx="158.5" cy="741.0" r="2.4" fill="#fff" stroke="#0cc52c" stroke-width="1.7"/><circle cx="316.2" cy="606.6" r="2.4" fill="#fff" stroke="#0cc52c" stroke-width="1.7"/><circle cx="473.9" cy="608.1" r="2.4" fill="#fff" stroke="#0cc52c" stroke-width="1.7"/><circle cx="631.6" cy="707.7" r="2.4" fill="#fff" stroke="#0cc52c" stroke-width="1.7"/><circle cx="789.3" cy="642.2" r="2.4" fill="#fff" stroke="#0cc52c" stroke-width="1.7"/><circle cx="947.0" cy="578.1" r="2.4" fill="#fff" stroke="#0cc52c" stroke-width="1.7"/><circle cx="1104.7" cy="615.5" r="2.4" fill="#fff" stroke="#0cc52c" stroke-width="1.7"/></svg></div>
<svg class="b" style="left:121.50px;top:461.30px;" width="5.71429" height="8" viewBox="0 0 10 14"><path d="M1 1.2H9M1 4.5H9M1 1.2H3.8C7.6 1.2 7.6 7.8 3.8 7.8H1.2L7.2 13.3" fill="none" stroke="#666" stroke-width="1.3" stroke-linejoin="round"/></svg>
<div class="t" style="left:127.50px;top:457.80px;font-size:10.6px;line-height:15px;color:#666;font-weight:normal;letter-spacing:-0.182px;transform:scaleX(0.9313);transform-origin:0 50%;">7.5K</div>
<svg class="b" style="left:128.80px;top:523.30px;" width="5.71429" height="8" viewBox="0 0 10 14"><path d="M1 1.2H9M1 4.5H9M1 1.2H3.8C7.6 1.2 7.6 7.8 3.8 7.8H1.2L7.2 13.3" fill="none" stroke="#666" stroke-width="1.3" stroke-linejoin="round"/></svg>
<div class="t" style="left:134.80px;top:519.80px;font-size:10.6px;line-height:15px;color:#666;font-weight:normal;letter-spacing:-0.324px;transform:scaleX(0.9888);transform-origin:0 50%;">6K</div>
<svg class="b" style="left:119.60px;top:585.30px;" width="5.71429" height="8" viewBox="0 0 10 14"><path d="M1 1.2H9M1 4.5H9M1 1.2H3.8C7.6 1.2 7.6 7.8 3.8 7.8H1.2L7.2 13.3" fill="none" stroke="#666" stroke-width="1.3" stroke-linejoin="round"/></svg>
<div class="t" style="left:125.60px;top:581.80px;font-size:10.6px;line-height:15px;color:#666;font-weight:normal;letter-spacing:-0.035px;">4.5K</div>
<svg class="b" style="left:128.80px;top:647.30px;" width="5.71429" height="8" viewBox="0 0 10 14"><path d="M1 1.2H9M1 4.5H9M1 1.2H3.8C7.6 1.2 7.6 7.8 3.8 7.8H1.2L7.2 13.3" fill="none" stroke="#666" stroke-width="1.3" stroke-linejoin="round"/></svg>
<div class="t" style="left:134.80px;top:643.80px;font-size:10.6px;line-height:15px;color:#666;font-weight:normal;letter-spacing:-0.324px;transform:scaleX(0.9888);transform-origin:0 50%;">3K</div>
<svg class="b" style="left:121.50px;top:709.30px;" width="5.71429" height="8" viewBox="0 0 10 14"><path d="M1 1.2H9M1 4.5H9M1 1.2H3.8C7.6 1.2 7.6 7.8 3.8 7.8H1.2L7.2 13.3" fill="none" stroke="#666" stroke-width="1.3" stroke-linejoin="round"/></svg>
<div class="t" style="left:127.50px;top:705.80px;font-size:10.6px;line-height:15px;color:#666;font-weight:normal;letter-spacing:-0.182px;transform:scaleX(0.9313);transform-origin:0 50%;">1.5K</div>
<div class="t" style="left:97.3px;top:639.7px;font-size:10.6px;line-height:14px;color:#66707c;transform:translate(-50%,-50%) rotate(-90deg);letter-spacing:0.1px;">Sales (<svg width="6" height="8.4" viewBox="0 0 10 14" style="vertical-align:-0.5px"><path d="M1 1.2H9M1 4.5H9M1 1.2H3.8C7.6 1.2 7.6 7.8 3.8 7.8H1.2L7.2 13.3" fill="none" stroke="#66707c" stroke-width="1.4"/></svg>)</div>
<svg class="b" style="left:814.50px;top:441.50px;" width="11" height="7" viewBox="0 0 11 7"><path d="M0 3.5 H11" stroke="#1f6ed4" stroke-width="1.5"/><circle cx="5.5" cy="3.5" r="2.1" fill="#fff" stroke="#1f6ed4" stroke-width="1.3"/></svg>
<div class="t" style="left:829.00px;top:437.10px;font-size:11px;line-height:15px;color:#2f72d6;font-weight:normal;letter-spacing:-0.150px;transform:scaleX(0.9724);transform-origin:0 50%;">Gross Sales</div>
<svg class="b" style="left:893.50px;top:441.50px;" width="11" height="7" viewBox="0 0 11 7"><path d="M0 3.5 H11" stroke="#c9781f" stroke-width="1.5"/><circle cx="5.5" cy="3.5" r="2.1" fill="#fff" stroke="#c9781f" stroke-width="1.3"/></svg>
<div class="t" style="left:908.00px;top:437.10px;font-size:11px;line-height:15px;color:#d08a2a;font-weight:normal;letter-spacing:-0.095px;">Sales After Cancellations</div>
<svg class="b" style="left:1036.00px;top:441.50px;" width="11" height="7" viewBox="0 0 11 7"><path d="M0 3.5 H11" stroke="#0cc52c" stroke-width="1.5"/><circle cx="5.5" cy="3.5" r="2.1" fill="#fff" stroke="#0cc52c" stroke-width="1.3"/></svg>
<div class="b" style="left:1050px;top:436px;width:46.5px;height:18px;overflow:hidden;">
<div class="t" style="left:0.80px;top:1.10px;font-size:11px;line-height:15px;color:#17c636;font-weight:normal;letter-spacing:-0.149px;transform:scaleX(0.9893);transform-origin:0 50%;">Net Sales</div>
</div>
<div class="b" style="left:1107.30px;top:345.80px;width:471.00px;height:400.00px;border:1px solid #f1f1f1;border-radius:10px;background:#fff;box-shadow:0 0 1.5px rgba(0,0,0,0.07);"></div>
<div class="t" style="left:1125.00px;top:362.70px;font-size:14.2px;line-height:20px;color:#222;font-weight:normal;letter-spacing:0.240px;-webkit-text-stroke:0.2px #222;">Your sales across different states</div>
<div class="t" style="left:1451.40px;top:394.20px;font-size:9.2px;line-height:13px;color:#555;font-weight:normal;letter-spacing:-0.154px;">Net Units</div>
<div class="b" style="left:1381.00px;top:406.00px;width:177.70px;height:10.00px;border-radius:5px;background:linear-gradient(90deg,#e4f5ea 0%,#b5dbc4 30%,#7ab595 58%,#449464 80%,#0a7036 97%);"></div>
<div class="t" style="left:1380.70px;top:416.70px;font-size:9.2px;line-height:13px;color:#555;font-weight:normal;">0</div>
<div class="t" style="left:1438.10px;top:416.70px;font-size:9.2px;line-height:13px;color:#555;font-weight:normal;">1</div>
<div class="t" style="left:1495.30px;top:416.70px;font-size:9.2px;line-height:13px;color:#555;font-weight:normal;">2</div>
<div class="t" style="left:1553.20px;top:416.70px;font-size:9.2px;line-height:13px;color:#555;font-weight:normal;">4</div>
<div class="b" style="left:1108.3px;top:380px;width:469px;height:344px;overflow:hidden;"><svg style="position:absolute;left:-1108.3px;top:-380px;font-family:'Liberation Sans',sans-serif;" width="1600" height="724" viewBox="0 0 1600 724"><polygon points="1220.4,420.7 1222.8,415.2 1227.6,411.7 1235.2,410.4 1235.9,408.3 1245.6,406.2 1255.3,405.8 1258.0,409.0 1264.9,414.5 1271.8,419.3 1277.4,425.6 1283.6,428.3 1286.4,431.1 1292.6,429.0 1299.5,425.6 1307.8,423.2 1317.4,425.6 1320.9,429.7 1320.2,435.9 1317.4,441.4 1311.9,447.7 1310.5,453.2 1304.3,455.3 1303.4,460.8 1306.4,464.9 1309.8,467.7 1311.6,474.6 1306.4,479.4 1300.6,476.7 1296.7,477.4 1296.7,482.4 1300.9,488.0 1302.2,494.9 1305.0,494.6 1307.1,497.0 1310.5,501.1 1316.0,503.2 1320.2,506.6 1326.4,510.8 1327.1,512.8 1323.0,517.0 1320.9,523.2 1320.2,528.0 1317.4,533.6 1324.4,536.3 1332.7,540.5 1338.2,545.3 1340.0,546.6 1346.9,548.0 1352.4,551.5 1360.7,554.2 1367.6,553.9 1373.2,553.5 1377.3,557.7 1381.5,562.5 1388.4,563.2 1395.3,566.0 1402.2,566.7 1409.1,568.7 1417.4,569.1 1422.9,568.0 1421.5,571.5 1418.1,574.9 1420.8,579.1 1425.7,578.4 1428.4,581.8 1431.9,584.6 1426.3,585.2 1420.7,593.5 1426.3,596.3 1429.7,599.7 1427.6,604.5 1429.7,608.7 1431.8,615.6 1432.5,622.5 1433.9,629.4 1433.2,634.9 1427.6,632.2 1423.0,631.0 1420.7,636.3 1413.8,634.9 1412.6,635.7 1407.1,639.2 1405.0,644.7 1407.1,648.9 1404.4,653.7 1398.8,659.2 1390.5,662.7 1382.2,668.2 1376.7,671.7 1371.2,679.3 1362.9,686.2 1354.6,694.5 1347.7,701.4 1346.3,705.5 1338.0,709.7 1332.5,713.8 1328.0,718.0 1234.0,718.0 1232.6,713.8 1230.5,702.8 1228.4,691.7 1225.7,682.0 1223.6,669.6 1222.2,661.3 1222.9,658.5 1224.3,655.8 1223.6,648.9 1222.9,642.0 1220.8,635.1 1220.8,627.5 1218.8,628.1 1217.4,632.3 1214.6,636.4 1206.3,637.1 1198.0,636.4 1189.7,632.3 1181.5,627.5 1173.9,624.7 1182.8,624.0 1189.7,621.2 1195.3,616.4 1194.6,615.0 1187.0,618.4 1180.1,619.8 1173.2,617.7 1169.0,612.9 1163.5,608.8 1164.2,605.3 1171.1,603.2 1171.8,598.4 1178.7,599.1 1187.0,599.8 1193.9,597.7 1199.4,597.7 1200.8,593.6 1198.7,588.0 1196.6,579.7 1191.1,577.7 1189.0,574.2 1188.4,566.6 1181.5,563.9 1180.8,559.0 1185.6,553.5 1189.7,547.3 1194.6,544.5 1198.0,548.7 1206.3,545.9 1213.2,541.7 1217.4,535.5 1222.9,530.0 1224.9,529.4 1230.4,522.5 1238.0,515.6 1238.7,510.1 1244.2,504.5 1247.0,497.6 1245.6,492.8 1247.7,487.3 1255.3,483.8 1259.4,482.4 1262.9,478.6 1258.0,480.1 1249.0,478.0 1247.7,475.3 1241.4,472.5 1234.5,469.1 1233.2,458.0 1231.5,448.4 1233.2,444.2 1241.4,438.0 1236.2,436.2 1234.5,431.1 1227.6,426.2 1220.4,425.6" fill="#e5f5eb" stroke="#e5f5eb" stroke-width="0.4" stroke-linejoin="round"/><path d="M1241.4 438 L1248 441 L1256 447 L1262 456 L1270 463 L1276 470 L1284 472 L1292 476 L1296.7 477.4 M1270 463 L1264 470 L1262.9 478.6 M1198.7 593.6 L1210 592 L1224 596 L1232 604 L1240 612 L1246 616 M1284.1 680 L1283 690 L1285 700 L1282 713 M1316 674 L1326 692 L1318 700 L1304 706 L1294 713 M1345 688 L1330 694 L1322 700" fill="none" stroke="#d3e9da" stroke-width="0.6"/><polygon points="1420.8,558.4 1420.8,552.8 1421.5,546.6 1425.7,544.5 1430.5,544.5 1431.2,550.0 1429.8,554.2 1431.0,557.0 1428.4,558.4" fill="#e5f5eb" stroke="#d9eee1" stroke-width="0.6" stroke-linejoin="round"/><polygon points="1466.3,548.7 1473.2,547.3 1481.5,546.6 1488.4,536.3 1498.0,532.8 1500.8,528.0 1506.3,525.2 1511.8,527.3 1518.8,526.6 1524.3,523.8 1528.4,526.6 1527.0,530.7 1531.2,530.7 1531.2,535.6 1536.7,539.0 1542.2,544.5 1538.1,550.1 1535.3,552.8 1538.8,557.7 1535.3,556.3 1529.8,554.2 1524.3,554.2 1520.1,550.0 1522.9,546.2 1514.6,548.0 1506.3,550.8 1499.4,554.2 1495.3,558.4 1481.5,560.4 1472.6,561.1 1472.6,555.6 1469.9,551.5" fill="#e5f5eb" stroke="#d9eee1" stroke-width="0.6" stroke-linejoin="round"/><polygon points="1524.3,554.2 1525.7,557.0 1517.4,562.5 1514.5,568.0 1513.3,572.8 1511.8,576.3 1505.0,579.7 1507.8,586.6 1505.0,594.9 1500.9,601.8 1499.5,604.5 1491.2,603.2 1491.2,610.1 1488.4,618.4 1487.0,628.0 1482.9,631.5 1479.4,629.4 1478.8,621.1 1476.7,612.8 1476.0,604.5 1475.3,597.6 1478.7,599.8 1484.2,595.7 1487.0,591.5 1489.7,584.6 1492.5,579.1 1496.6,574.9 1498.0,570.8 1502.2,566.6 1507.7,563.2 1513.2,559.0 1520.0,556.0" fill="#e5f5eb" stroke="#d9eee1" stroke-width="0.6" stroke-linejoin="round"/><path d="M1511.8 576.3 L1504.9 579.1 L1498 577 L1494 578 M1491.2 603.2 L1485.7 600.4 L1485.7 590.7 L1489.8 583.8" fill="none" stroke="#d3e9da" stroke-width="0.6"/><polygon points="1471.8,597.6 1475.3,599.7 1476.0,604.5 1472.5,608.7 1469.8,615.6 1466.3,617.7 1463.6,614.2 1460.8,608.7 1463.0,604.5 1469.1,600.4" fill="#e5f5eb" stroke="#d9eee1" stroke-width="0.6" stroke-linejoin="round"/><polygon points="1444.8,564.6 1451.0,562.5 1460.0,563.2 1471.8,561.1 1481.5,560.4 1495.3,558.4 1499.4,554.2 1506.3,550.8 1514.6,548.0 1522.9,546.2 1520.1,550.0 1522.9,554.2 1518.0,556.5 1513.2,559.0 1507.7,563.2 1502.2,566.6 1498.0,570.8 1496.6,574.9 1492.5,579.1 1489.7,584.6 1487.0,591.5 1484.2,595.7 1478.7,599.8 1475.2,597.7 1475.9,592.9 1480.1,587.4 1481.5,583.2 1478.7,579.1 1474.5,577.7 1471.8,573.6 1464.9,574.2 1455.0,575.0 1445.5,575.6 1442.8,570.8" fill="#b0d8c0" stroke="#d9eee1" stroke-width="0.6" stroke-linejoin="round"/><polygon points="1444.2,574.8 1455.0,576.0 1466.3,575.5 1474.6,573.5 1476.0,578.3 1481.5,583.1 1478.8,588.0 1474.0,587.5 1462.2,585.2 1452.5,585.2 1445.6,583.1 1443.5,578.3" fill="#e5f5eb" stroke="#d9eee1" stroke-width="0.6" stroke-linejoin="round"/><polygon points="1420.8,558.4 1428.4,558.4 1434.0,562.5 1442.2,563.2 1444.8,564.6 1442.8,570.8 1439.5,574.2 1435.3,571.5 1431.9,568.0 1428.5,568.8 1426.4,566.6 1422.9,568.0 1421.5,562.0" fill="#b0d8c0" stroke="#d9eee1" stroke-width="0.6" stroke-linejoin="round"/><polygon points="1422.9,568.0 1426.4,566.6 1425.0,571.0 1421.5,574.5 1421.4,574.1 1423.5,578.3 1429.7,580.4 1431.8,583.8 1426.3,585.2 1422.1,589.4 1420.7,593.5 1426.3,596.3 1429.7,599.7 1427.6,604.5 1429.7,608.7 1431.8,615.6 1432.5,622.5 1433.9,629.4 1433.2,634.9 1427.6,632.2 1423.0,630.5 1420.7,636.3 1413.8,634.9 1408.3,630.8 1405.5,626.6 1401.6,622.2 1397.4,616.6 1392.6,613.2 1396.1,609.7 1404.4,607.0 1412.6,601.5 1416.8,595.9 1420.2,590.4 1419.6,586.3 1416.7,583.9 1420.8,579.1 1418.1,574.9 1421.5,571.5" fill="#b0d8c0" stroke="#d9eee1" stroke-width="0.6" stroke-linejoin="round"/><polygon points="1286.4,510.8 1288.4,514.2 1287.7,517.7 1291.2,521.8 1295.3,519.7 1299.5,523.2 1302.2,526.6 1309.2,529.4 1314.7,532.9 1317.4,533.6 1324.4,536.3 1332.7,540.5 1338.2,545.3 1340.0,546.6 1346.9,548.0 1352.4,551.5 1360.7,554.2 1367.6,553.9 1369.8,560.0 1374.0,565.5 1368.4,568.3 1369.8,573.8 1375.3,578.0 1365.7,582.1 1360.1,587.6 1361.5,595.9 1360.1,601.5 1356.0,604.2 1353.2,601.5 1352.5,595.2 1347.7,593.9 1340.8,589.0 1335.3,586.3 1327.0,589.0 1321.5,587.6 1320.8,582.8 1315.9,584.9 1307.6,586.3 1302.8,580.7 1302.1,575.2 1304.9,568.3 1300.7,563.5 1293.8,562.5 1287.8,559.7 1285.1,556.3 1283.7,551.0 1284.0,545.0 1284.9,541.8 1282.9,534.9 1280.1,529.4 1279.0,523.9 1280.8,516.8 1285.0,511.5" fill="#0a7036" stroke="#8fc5a5" stroke-width="0.5" stroke-linejoin="round"/><polygon points="1367.6,553.9 1373.2,553.5 1377.3,557.7 1381.5,562.5 1388.4,563.2 1395.3,566.0 1402.2,566.7 1409.1,568.7 1417.4,569.1 1422.9,568.0 1421.5,571.5 1418.1,574.9 1420.8,579.1 1416.7,583.9 1411.8,587.4 1408.4,592.9 1400.8,595.7 1393.9,591.5 1387.0,595.0 1380.1,596.4 1373.2,594.3 1367.6,596.4 1362.1,595.7 1359.3,590.1 1360.7,585.3 1369.7,579.8 1375.9,577.7 1369.7,572.2 1367.6,567.3 1373.2,565.3 1369.7,559.7" fill="#0a7036" stroke="#8fc5a5" stroke-width="0.6" stroke-linejoin="round"/><polygon points="1277.4,504.5 1279.4,505.2 1280.1,509.4 1284.3,510.8 1285.0,511.5 1280.8,516.8 1279.0,523.9 1280.1,529.4 1282.9,534.9 1284.9,541.8 1284.3,547.3 1282.9,548.1 1278.1,549.4 1277.4,546.0 1275.3,543.2 1271.8,545.3 1268.4,543.9 1267.0,547.4 1264.9,546.7 1266.3,542.5 1262.2,539.1 1259.4,534.9 1258.0,529.4 1255.3,526.6 1251.8,525.3 1247.7,524.6 1245.6,520.4 1246.3,517.7 1251.8,517.0 1255.3,520.4 1259.4,521.8 1264.9,518.4 1269.1,514.2 1273.2,511.4 1276.7,510.1" fill="#0a7036" stroke="#8fc5a5" stroke-width="0.5" stroke-linejoin="round"/><path d="M1285.5 511.5 L1281.2 517 L1279.4 524 L1280.4 529.6 L1283.2 535 L1285.2 541.8 L1284.6 547" fill="none" stroke="#9fcdb1" stroke-width="0.7"/><polygon points="1276.0,534.5 1278.5,532.8 1281.5,533.5 1282.5,537.0 1280.5,539.4 1277.0,538.8 1275.6,537.0" fill="#bfe0cc" stroke="#bfe0cc" stroke-width="0.2" stroke-linejoin="round"/><polygon points="1262.9,478.6 1259.4,482.4 1255.3,483.8 1247.7,487.3 1245.6,492.8 1247.0,497.6 1244.2,504.5 1238.7,510.1 1238.0,515.6 1246.3,517.7 1251.8,517.0 1255.3,520.4 1259.4,521.8 1264.9,518.4 1269.1,514.2 1273.2,511.4 1276.7,510.1 1277.4,504.5 1275.3,502.5 1271.8,499.7 1267.7,494.9 1264.2,486.6 1263.6,480.0" fill="#b0d8c0" stroke="#d9eee1" stroke-width="0.6" stroke-linejoin="round"/><polygon points="1305.0,494.6 1307.1,497.0 1310.5,501.1 1316.0,503.2 1320.2,506.6 1326.4,510.8 1327.1,512.8 1323.0,517.0 1320.9,523.2 1320.2,528.0 1317.4,533.6 1314.7,532.9 1309.2,529.4 1302.2,526.6 1299.5,523.2 1295.3,519.7 1291.2,521.8 1287.7,517.7 1288.4,514.2 1286.4,510.8 1288.4,508.7 1289.8,503.9 1296.7,499.7 1302.2,497.0" fill="#b0d8c0" stroke="#d9eee1" stroke-width="0.6" stroke-linejoin="round"/><polygon points="1300.0,561.8 1292.0,563.9 1286.5,567.3 1278.2,572.8 1272.6,577.0 1271.9,581.1 1276.1,583.9 1282.3,583.2 1283.0,586.6 1276.8,589.4 1278.2,596.3 1276.1,599.8 1270.6,599.1 1261.6,605.3 1258.8,605.3 1261.6,599.8 1262.3,593.6 1256.1,593.6 1254.7,589.4 1250.5,590.8 1249.2,593.6 1250.5,601.8 1250.5,608.8 1247.1,614.3 1245.0,618.4 1242.2,624.0 1241.6,628.0 1243.6,632.3 1237.4,633.7 1238.1,636.4 1242.9,637.1 1245.7,635.7 1253.3,637.8 1260.2,639.9 1267.1,640.6 1268.5,643.3 1272.6,642.0 1276.1,637.1 1283.7,635.7 1285.1,638.5 1292.0,637.8 1296.6,636.0 1304.9,636.7 1310.4,636.0 1318.7,636.7 1321.5,639.4 1324.2,637.4 1327.0,631.8 1331.1,626.3 1339.4,620.8 1343.6,615.3 1343.6,611.8 1337.3,608.4 1338.0,604.9 1347.7,604.2 1351.8,601.5 1352.5,595.2 1347.7,593.9 1340.8,589.0 1335.3,586.3 1327.0,589.0 1321.5,587.6 1320.8,582.8 1315.9,584.9 1307.6,586.3 1302.8,580.7 1302.1,575.2 1304.9,568.3 1300.7,563.5" fill="#7ab595" stroke="#cfe9d9" stroke-width="0.6" stroke-linejoin="round"/><polygon points="1297.3,584.9 1300.0,590.4 1302.8,595.9 1301.4,600.1 1295.2,597.3 1293.8,591.8 1295.9,587.0" fill="#0a7036" stroke="#cfe9d9" stroke-width="0.7" stroke-linejoin="round"/><polygon points="1338.0,604.9 1347.7,604.2 1351.8,601.5 1353.2,601.5 1356.0,604.2 1360.1,601.5 1362.9,605.6 1365.7,607.7 1368.4,612.5 1369.8,616.6 1373.3,618.7 1368.4,623.6 1368.4,626.3 1362.9,629.1 1361.5,634.6 1360.1,641.5 1354.6,644.3 1349.1,647.0 1347.7,654.0 1347.7,655.8 1351.8,659.9 1349.1,661.3 1340.8,659.2 1342.9,662.7 1344.9,669.6 1343.6,676.5 1338.0,683.4 1336.6,688.2 1331.1,688.2 1330.4,683.4 1327.0,679.3 1321.5,675.8 1321.5,672.4 1327.0,666.8 1324.2,664.1 1321.5,657.2 1324.2,648.9 1322.1,643.3 1321.5,639.4 1324.2,637.4 1327.0,631.8 1331.1,626.3 1339.4,620.8 1343.6,615.3 1343.6,611.8 1337.3,608.4" fill="#b0d8c0" stroke="#e3f3e9" stroke-width="0.6" stroke-linejoin="round"/><polygon points="1361.5,595.9 1362.1,595.7 1367.6,596.4 1373.2,594.3 1380.1,596.4 1387.0,595.0 1393.9,591.5 1400.8,595.7 1408.4,592.9 1411.8,587.4 1416.7,583.9 1419.6,586.3 1420.2,590.4 1416.8,595.9 1412.6,601.5 1404.4,607.0 1396.1,609.7 1392.6,613.2 1397.4,616.6 1401.6,622.2 1404.4,626.3 1400.2,624.9 1394.7,623.6 1393.3,629.1 1387.8,629.1 1382.2,629.8 1380.9,624.9 1375.3,624.9 1369.8,623.6 1368.4,623.6 1373.3,618.7 1369.8,616.6 1368.4,612.5 1365.7,607.7 1362.9,605.6 1360.1,601.5" fill="#7ab595" stroke="#cfe9d9" stroke-width="0.6" stroke-linejoin="round"/><polygon points="1368.4,626.1 1369.8,623.6 1375.3,624.9 1380.9,625.4 1382.9,629.5 1387.8,629.1 1393.3,630.2 1395.4,625.4 1401.6,626.1 1404.4,626.3 1407.1,631.6 1412.6,635.7 1407.1,639.2 1405.0,644.7 1407.1,648.9 1404.4,653.7 1398.8,659.2 1390.5,662.7 1382.2,668.2 1376.7,671.7 1371.2,675.1 1362.9,671.0 1357.4,676.5 1355.3,680.0 1351.8,681.3 1350.4,679.3 1346.3,684.8 1336.6,688.2 1338.0,683.4 1343.6,676.5 1344.9,669.6 1342.9,662.7 1340.8,659.2 1349.1,661.3 1351.8,659.9 1347.7,655.8 1347.7,648.9 1351.8,644.7 1358.8,642.0 1361.5,635.1 1362.9,629.5" fill="#449464" stroke="#cfe9d9" stroke-width="0.6" stroke-linejoin="round"/><polygon points="1237.4,633.7 1243.6,632.3 1245.7,635.7 1253.3,637.8 1260.2,639.9 1267.1,640.6 1268.5,643.3 1272.6,642.0 1276.1,637.1 1283.7,635.7 1285.1,638.5 1292.0,637.8 1296.6,636.0 1304.9,636.7 1310.4,636.0 1318.7,636.7 1321.5,639.4 1322.1,643.3 1324.2,648.9 1321.5,657.2 1324.2,664.1 1327.0,666.8 1321.5,672.4 1319.4,675.8 1316.6,673.7 1316.6,666.8 1313.2,664.1 1306.3,665.4 1300.7,662.0 1295.2,660.6 1293.8,665.4 1288.3,669.6 1284.1,679.3 1278.2,684.8 1272.6,690.3 1268.5,694.5 1260.2,694.5 1259.5,699.3 1249.2,702.8 1242.2,706.9 1244.3,713.8 1245.0,718.0 1233.5,718.0 1232.6,713.8 1230.5,702.8 1228.4,691.7 1225.7,682.0 1223.6,669.6 1222.2,661.3 1222.9,658.5 1224.3,655.8 1228.4,657.9 1231.9,651.6 1236.7,649.6 1238.1,644.7 1237.4,639.2 1242.9,637.1 1238.1,636.4" fill="#449464" stroke="#cfe9d9" stroke-width="0.6" stroke-linejoin="round"/><text x="1280.1" y="446.7" textLength="21.5" lengthAdjust="spacingAndGlyphs" font-size="6.0" font-weight="bold" fill="#222" stroke="#222" stroke-width="0" paint-order="stroke">Ladakh</text><text x="1207.2" y="466.2" textLength="58.4" lengthAdjust="spacingAndGlyphs" font-size="6.0" font-weight="bold" fill="#222" stroke="#222" stroke-width="0" paint-order="stroke">Jammu and Kashmir</text><text x="1267.7" y="485.4" textLength="51.4" lengthAdjust="spacingAndGlyphs" font-size="6.0" font-weight="bold" fill="#222" stroke="#222" stroke-width="0" paint-order="stroke">Himachal Pradesh</text><text x="1242.1" y="502.2" textLength="19.7" lengthAdjust="spacingAndGlyphs" font-size="6.0" font-weight="bold" fill="#222" stroke="#222" stroke-width="0" paint-order="stroke">Punjab</text><text x="1269.1" y="503.8" textLength="33.1" lengthAdjust="spacingAndGlyphs" font-size="6.0" font-weight="bold" fill="#222" stroke="#222" stroke-width="0" paint-order="stroke">Chandigarh</text><text x="1292.6" y="515.7" textLength="35.2" lengthAdjust="spacingAndGlyphs" font-size="6.0" font-weight="bold" fill="#222" stroke="#222" stroke-width="0" paint-order="stroke">Uttarakhand</text><text x="1256.0" y="525.7" textLength="23.0" lengthAdjust="spacingAndGlyphs" font-size="6.0" font-weight="bold" fill="#222" stroke="#222" stroke-width="0" paint-order="stroke">Haryana</text><text x="1283.6" y="536.5" textLength="14.5" lengthAdjust="spacingAndGlyphs" font-size="6.0" font-weight="bold" fill="#222" stroke="#222" stroke-width="0" paint-order="stroke">Delhi</text><text x="1309.8" y="562.7" textLength="39.4" lengthAdjust="spacingAndGlyphs" font-size="6.0" font-weight="bold" fill="#222" stroke="#222" stroke-width="0" paint-order="stroke">Uttar Pradesh</text><text x="1380.8" y="574.4" textLength="14.5" lengthAdjust="spacingAndGlyphs" font-size="6.0" font-weight="bold" fill="#222" stroke="#222" stroke-width="0" paint-order="stroke">Bihar</text><text x="1416.4" y="540.8" textLength="18.9" lengthAdjust="spacingAndGlyphs" font-size="6.0" font-weight="bold" fill="#222" stroke="#222" stroke-width="0" paint-order="stroke">Sikkim</text><text x="1367.6" y="604.6" textLength="30.2" lengthAdjust="spacingAndGlyphs" font-size="6.0" font-weight="bold" fill="#222" stroke="#222" stroke-width="0" paint-order="stroke">Jharkhand</text><text x="1460.0" y="568.4" textLength="19.4" lengthAdjust="spacingAndGlyphs" font-size="6.0" font-weight="bold" fill="#222" stroke="#222" stroke-width="0" paint-order="stroke">Assam</text><text x="1482.6" y="543.3" textLength="54.1" lengthAdjust="spacingAndGlyphs" font-size="6.0" font-weight="bold" fill="#222" stroke="#222" stroke-width="0" paint-order="stroke">Arunachal Pradesh</text><text x="1500.1" y="570.2" textLength="26.9" lengthAdjust="spacingAndGlyphs" font-size="6.0" font-weight="bold" fill="#222" stroke="#222" stroke-width="0" paint-order="stroke">Nagaland</text><text x="1443.9" y="583.6" textLength="30.6" lengthAdjust="spacingAndGlyphs" font-size="6.0" font-weight="bold" fill="#222" stroke="#222" stroke-width="0" paint-order="stroke">Meghalaya</text><text x="1499.1" y="597.1" textLength="23.8" lengthAdjust="spacingAndGlyphs" font-size="6.0" font-weight="bold" fill="#222" stroke="#222" stroke-width="0" paint-order="stroke">Manipur</text><text x="1448.4" y="605.4" textLength="20.0" lengthAdjust="spacingAndGlyphs" font-size="6.0" font-weight="bold" fill="#222" stroke="#222" stroke-width="0" paint-order="stroke">Tripura</text><text x="1478.1" y="615.5" textLength="24.8" lengthAdjust="spacingAndGlyphs" font-size="6.0" font-weight="bold" fill="#222" stroke="#222" stroke-width="0" paint-order="stroke">Mizoram</text><text x="1405.8" y="613.7" textLength="35.7" lengthAdjust="spacingAndGlyphs" font-size="6.0" font-weight="bold" fill="#222" stroke="#222" stroke-width="0" paint-order="stroke">West Bengal</text><text x="1269.9" y="611.3" textLength="48.1" lengthAdjust="spacingAndGlyphs" font-size="6.0" font-weight="bold" fill="#222" stroke="#222" stroke-width="0" paint-order="stroke">Madhya Pradesh</text><text x="1222.9" y="571.2" textLength="28.3" lengthAdjust="spacingAndGlyphs" font-size="6.0" font-weight="bold" fill="#222" stroke="#222" stroke-width="0" paint-order="stroke">Rajasthan</text><text x="1201.2" y="615.7" textLength="21.3" lengthAdjust="spacingAndGlyphs" font-size="6.0" font-weight="bold" fill="#222" stroke="#222" stroke-width="0" paint-order="stroke">Gujarat</text><text x="1323.5" y="636.4" textLength="36.6" lengthAdjust="spacingAndGlyphs" font-size="6.0" font-weight="bold" fill="#222" stroke="#222" stroke-width="0" paint-order="stroke">Chhattisgarh</text><text x="1361.8" y="655.1" textLength="20.4" lengthAdjust="spacingAndGlyphs" font-size="6.0" font-weight="bold" fill="#222" stroke="#222" stroke-width="0" paint-order="stroke">Odisha</text><text x="1289.4" y="688.7" textLength="29.0" lengthAdjust="spacingAndGlyphs" font-size="6.0" font-weight="bold" fill="#222" stroke="#222" stroke-width="0" paint-order="stroke">Telangana</text><text x="1178.0" y="646.5" textLength="42.8" lengthAdjust="spacingAndGlyphs" font-size="6.0" font-weight="bold" fill="#222" stroke="#222" stroke-width="0" paint-order="stroke">Daman and Diu</text><text x="1144.6" y="658.3" textLength="67.2" lengthAdjust="spacingAndGlyphs" font-size="6.0" font-weight="bold" fill="#222" stroke="#222" stroke-width="0" paint-order="stroke">Dadra and Nagar Haveli</text><text x="1237.8" y="670.0" textLength="35.9" lengthAdjust="spacingAndGlyphs" font-size="6.0" font-weight="bold" fill="#222" stroke="#222" stroke-width="0" paint-order="stroke">Maharashtra</text></svg></div>
<div class="b" style="left:62.00px;top:713.70px;width:1532.00px;height:10.30px;background:#fafafa;"></div>
<svg class="b" style="left:67.00px;top:717.20px;" width="8" height="10.4" viewBox="0 0 8 10.4"><path d="M8 0.3 Q8 0 7.6 0.2 L0.3 4.9 Q0 5.2 0.3 5.5 L7.6 10.2 Q8 10.4 8 10.1 Z" fill="#8a8a8a"/></svg>
<svg class="b" style="left:1581.50px;top:717.20px;" width="8" height="10.4" viewBox="0 0 8 10.4"><path d="M0 0.3 Q0 0 0.4 0.2 L7.7 4.9 Q8 5.2 7.7 5.5 L0.4 10.2 Q0 10.4 0 10.1 Z" fill="#8a8a8a"/></svg>
<div class="b" style="left:1594.00px;top:45.00px;width:6.00px;height:679.00px;background:#fafafa;"></div>
<svg class="b" style="left:1596.30px;top:51.80px;" width="8" height="6.6" viewBox="0 0 8 6.6"><path d="M0 6.6 L5.4 0 L10.8 6.6 Z" fill="#8a8a8a"/></svg>
<div class="b" style="left:1597.30px;top:65.00px;width:6.00px;height:243.00px;background:#7f7f7f;border-radius:3px;"></div>
<svg class="b" style="left:1596.50px;top:702.00px;" width="8" height="7" viewBox="0 0 8 7"><path d="M0 0 L5 7 L10 0 Z" fill="#8a8a8a"/></svg>
<div class="b" style="left:1514.30px;top:683.90px;width:67.70px;height:31.60px;background:#3c444e;border-radius:16px;box-shadow:0 1px 5px rgba(0,0,0,0.28);"></div>
<div class="t" style="left:1526.80px;top:690.60px;font-size:13.2px;line-height:18px;color:#fff;font-weight:bold;letter-spacing:-0.238px;transform:scaleX(0.9179);transform-origin:0 50%;">Help</div>
<svg class="b" style="left:1558.00px;top:693.00px;" width="13.2" height="13.2" viewBox="0 0 13.2 13.2"><circle cx="6.6" cy="6.6" r="5.8" fill="none" stroke="#fff" stroke-width="1.1"/><path d="M4.7 5.2 Q4.7 3.4 6.6 3.4 Q8.5 3.4 8.5 5 Q8.5 6 7.4 6.6 Q6.6 7 6.6 8" fill="none" stroke="#fff" stroke-width="1.05" stroke-linecap="round"/><circle cx="6.6" cy="9.7" r="0.7" fill="#fff"/></svg>
</body></html>
